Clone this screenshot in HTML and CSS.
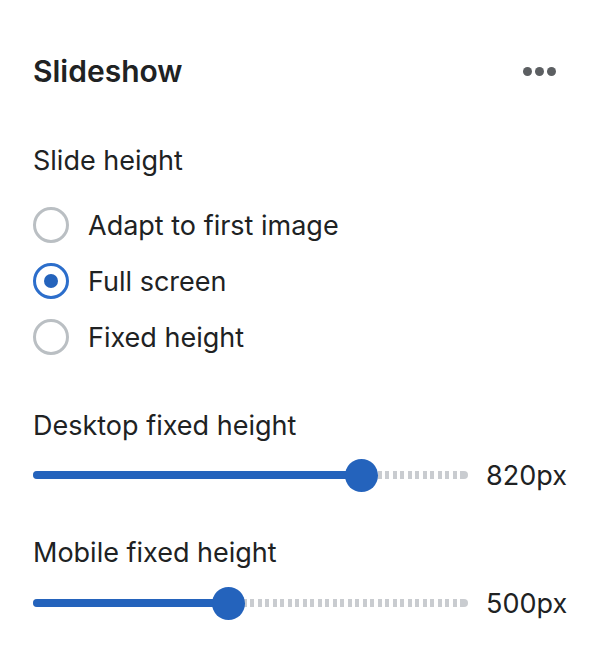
FILE: index.html
```html
<!DOCTYPE html>
<html lang="en">

<head>
    <meta charset="UTF-8">
    <meta name="viewport" content="width=device-width, initial-scale=1.0">
    <title>Slideshow</title>
    <link rel="stylesheet" href="styles.css">
</head>

<body>
    <div class="panel">
        <div class="header">
            <h2 class="title">Slideshow</h2>
            <div class="more">
                <span class="dot"></span>
                <span class="dot"></span>
                <span class="dot"></span>
            </div>
        </div>

        <div class="group">
            <div class="label">Slide height</div>
            <div class="radios">
                <label class="radio">
                    <span class="circle"></span>
                    <span>Adapt to first image</span>
                </label>
                <label class="radio">
                    <span class="circle on"></span>
                    <span>Full screen</span>
                </label>
                <label class="radio">
                    <span class="circle"></span>
                    <span>Fixed height</span>
                </label>
            </div>
        </div>

        <div class="group range-group">
            <div class="label">Desktop fixed height</div>
            <div class="slider">
                <div class="track">
                    <div class="fill" style="width: 75.6%"></div>
                    <div class="thumb" style="left: 75.6%"></div>
                </div>
                <div class="value">820px</div>
            </div>
        </div>

        <div class="group range-group">
            <div class="label">Mobile fixed height</div>
            <div class="slider">
                <div class="track">
                    <div class="fill" style="width: 45%"></div>
                    <div class="thumb" style="left: 45%"></div>
                </div>
                <div class="value">500px</div>
            </div>
        </div>
    </div>
</body>

</html>
```

FILE: styles.css
```css
* {
    margin: 0;
    padding: 0;
    box-sizing: border-box;
}

body {
    background-color: #ffffff;
    font-family: Inter, "Noto Sans", sans-serif;
    color: #202223;
}

.panel {
    padding: 50px 33px 0 33px;
}

.header {
    display: flex;
    justify-content: space-between;
    align-items: center;
    height: 42px;
}

.title {
    font-size: 30px;
    font-weight: 600;
}

.more {
    display: flex;
    gap: 3px;
    margin-right: 11px;
}

.dot {
    width: 9px;
    height: 9px;
    border-radius: 50%;
    background-color: #5c5f62;
}

.group {
    margin-top: 54px;
}

.label {
    font-size: 27px;
    line-height: 30px;
}

.radios {
    display: flex;
    flex-direction: column;
    gap: 20px;
    margin-top: 31px;
}

.radio {
    display: flex;
    align-items: center;
    gap: 19px;
    font-size: 27px;
    height: 36px;
}

.circle {
    width: 36px;
    height: 36px;
    border: 3px solid #babfc3;
    border-radius: 50%;
    display: flex;
    justify-content: center;
    align-items: center;
}

.circle.on {
    border-color: #2c6ecb;
}

.circle.on::after {
    content: "";
    width: 14px;
    height: 14px;
    border-radius: 50%;
    background-color: #2463bc;
}

.range-group {
    margin-top: 56px;
}

.range-group + .range-group {
    margin-top: 46px;
}

.slider {
    display: flex;
    align-items: center;
    gap: 18px;
    margin-top: 17px;
    height: 34px;
}

.range-group + .range-group .slider {
    margin-top: 18px;
}

.track {
    position: relative;
    flex: 1;
    height: 8px;
    border-radius: 4px;
    background: repeating-linear-gradient(90deg, #c9ccd0 0 4px, transparent 4px 7.5px);
}

.track::after {
    content: "";
    position: absolute;
    right: 0;
    top: 0;
    width: 8px;
    height: 8px;
    border-radius: 4px;
    background-color: #c9ccd0;
}

.fill {
    height: 8px;
    border-radius: 4px;
    background-color: #2463bc;
    position: relative;
    z-index: 1;
}

.thumb {
    position: absolute;
    top: 50%;
    width: 33px;
    height: 33px;
    margin-left: -16.5px;
    margin-top: -16.5px;
    border-radius: 50%;
    background-color: #2463bc;
    z-index: 2;
}

.value {
    font-size: 27px;
    width: 81px;
}
```
